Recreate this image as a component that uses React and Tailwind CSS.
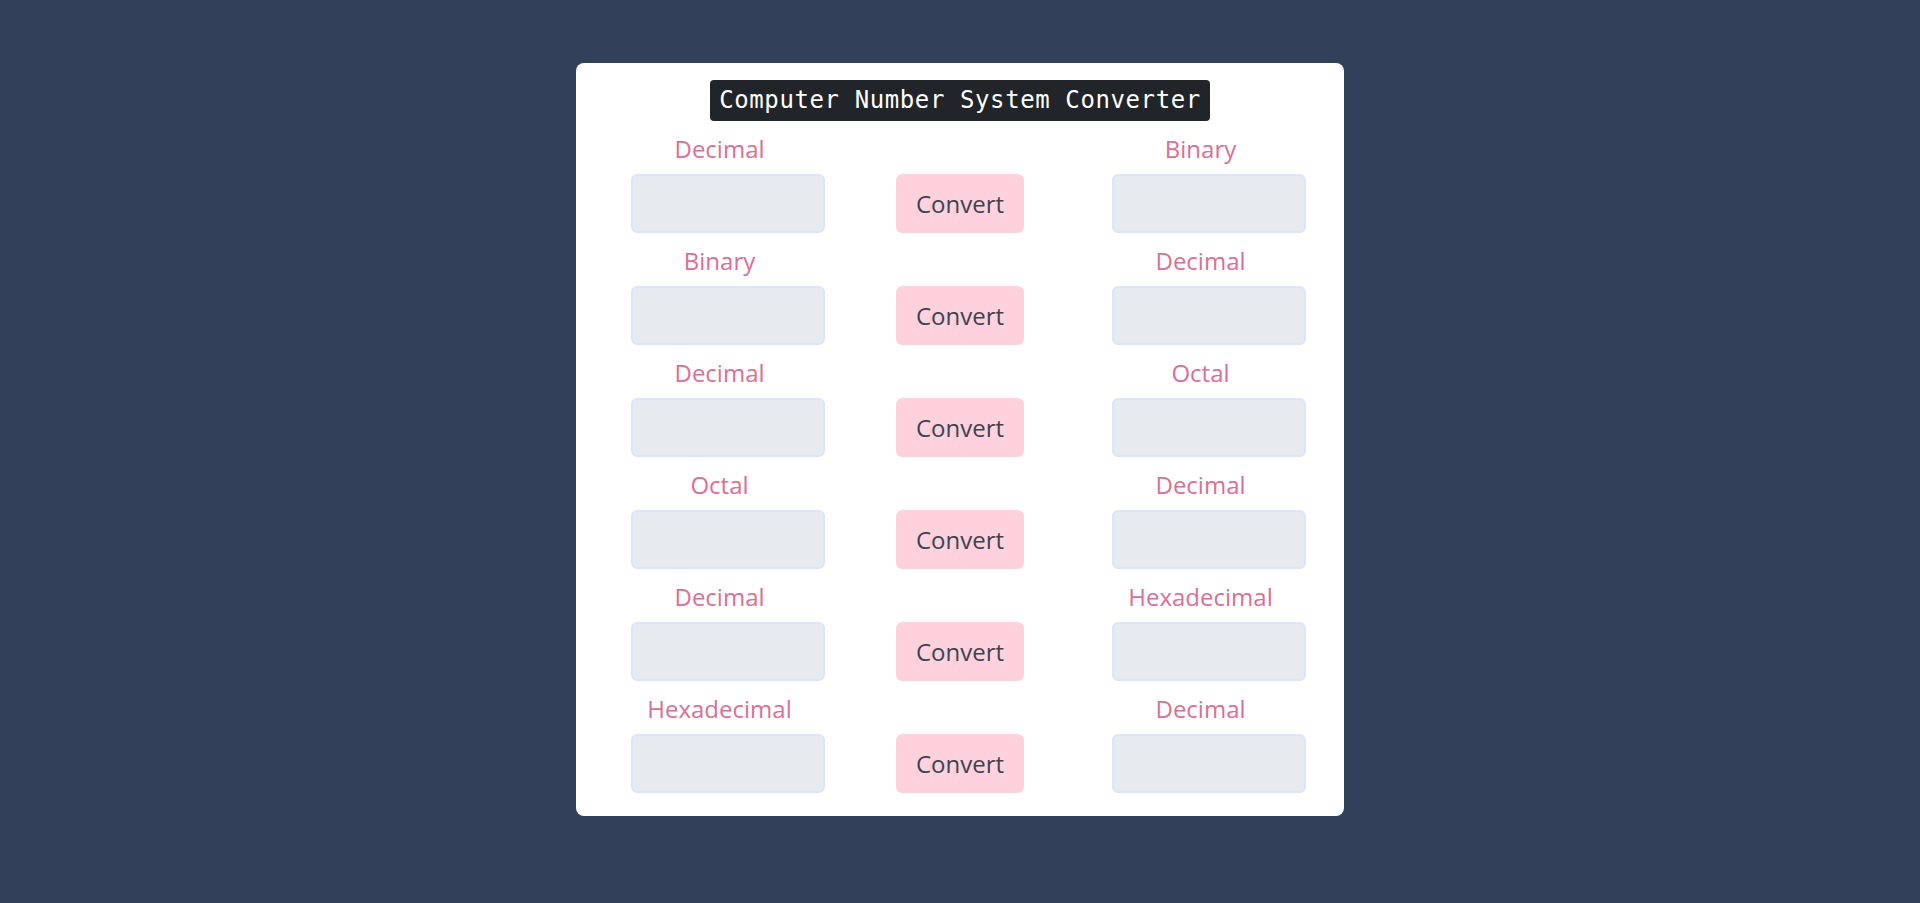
import React, { useState } from "react"

const rows = [
    ["Decimal", "Binary"],
    ["Binary", "Decimal"],
    ["Decimal", "Octal"],
    ["Octal", "Decimal"],
    ["Decimal", "Hexadecimal"],
    ["Hexadecimal", "Decimal"],
]

const Row = ({ from, to }) => {
    const [input, setInput] = useState("")
    const [output, setOutput] = useState("")

    return (
        <div className="grid grid-cols-[240px_241px_240px] mb-[10px]">
            <div className="flex flex-col items-center">
                <label className="h-9 leading-9 text-[24px] text-[#dc6f93]">{from}</label>
                <input
                    value={input}
                    onChange={(e) => setInput(e.target.value)}
                    className="ml-4 mt-[7px] w-[194px] h-[59px] bg-[#e7eaee] border-2 border-[#dde5fb] rounded-md px-2 text-[20px] outline-none"
                />
            </div>
            <div className="flex items-end justify-center">
                <button
                    onClick={() => setOutput(input)}
                    className="w-[128px] h-[59px] bg-[#ffd1dc] rounded-md text-[24px] text-[#3d4451]"
                >
                    Convert
                </button>
            </div>
            <div className="flex flex-col items-center">
                <label className="h-9 leading-9 text-[24px] text-[#dc6f93]">{to}</label>
                <input
                    value={output}
                    readOnly
                    className="ml-4 mt-[7px] w-[194px] h-[59px] bg-[#e7eaee] border-2 border-[#dde5fb] rounded-md px-2 text-[20px] outline-none"
                />
            </div>
        </div>
    )
}

export default function App() {
    return (
        <div className="min-h-screen bg-[#32405a] flex justify-center pt-[63px] font-['Open_Sans',sans-serif]">
            <div className="w-[768px] h-[753px] bg-white rounded-lg px-[23px] pt-[17px] flex flex-col items-center">
                <h1 className="h-[41px] px-[9px] bg-[#212529] rounded text-white text-[24px] leading-[41px] tracking-[0.6px] font-['DejaVu_Sans_Mono',monospace] mb-[10px]">
                    Computer Number System Converter
                </h1>
                <div>
                    {rows.map(([from, to], i) => (
                        <Row key={i} from={from} to={to} />
                    ))}
                </div>
            </div>
        </div>
    )
}
